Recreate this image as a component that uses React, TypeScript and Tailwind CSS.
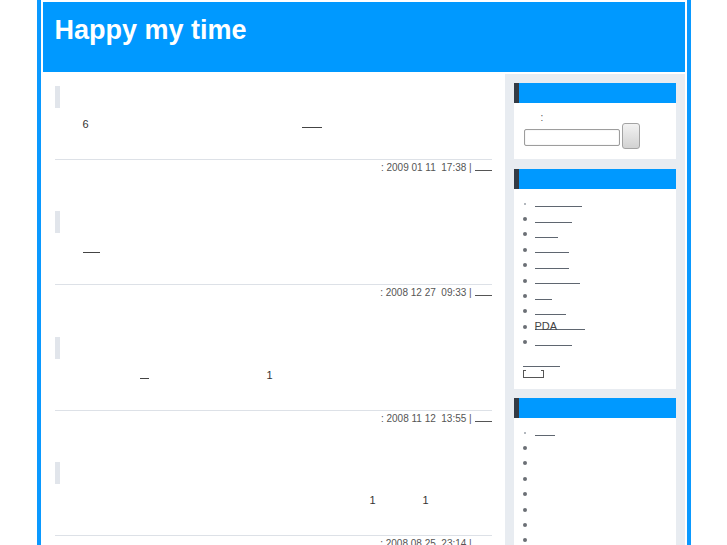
import React from "react";

const Blank = ({ w, color = "border-[#5f6670]" }: { w: string; color?: string }) => (
  <span className={`inline-block h-[7px] border-b ${color} ${w}`} />
);

const Spacer = ({ w }: { w: string }) => <span className={`inline-block h-[7px] ${w}`} />;

const Post = ({ content, footer }: { content: React.ReactNode; footer: string }) => (
  <div className="h-[125.33px] flex flex-col">
    <div className="w-[5px] h-[22px] bg-[#e1e5eb]" />
    <div className="mt-[10px] h-[13px] flex items-center pl-[28px] text-[11px] leading-[13px] text-[#333]">
      {content}
    </div>
    <div className="mt-[28px] border-t border-[#dde1e7]" />
    <div className="mt-[1px] h-[14px] leading-[14px] text-[10px] text-right text-[#555] whitespace-pre">
      {footer}
      <span className="inline-block w-[17px] h-[6px] border-b border-[#555]" />
    </div>
  </div>
);

const Bullet = ({ small }: { small?: boolean }) =>
  small ? (
    <span className="ml-[10px] mr-[9px] w-[2px] h-[2px] rounded-full bg-[#9aa0a8]" />
  ) : (
    <span className="ml-[9px] mr-[8px] w-[4px] h-[4px] rounded-full bg-[#6b6f75]" />
  );

const Item = ({ small, children }: { small?: boolean; children?: React.ReactNode }) => (
  <li className="h-[15.4px] flex items-center">
    <Bullet small={small} />
    {children}
  </li>
);

const WidgetHead = () => <div className="h-[20px] bg-[#0099ff] border-l-[5px] border-[#333b45]" />;

export default function App() {
  const cats = ["w-[47px]", "w-[37px]", "w-[23px]", "w-[34px]", "w-[34px]", "w-[45px]", "w-[17px]", "w-[31px]"];
  return (
    <div className="bg-white min-h-[545px] font-['Liberation_Sans',Arial,sans-serif]">
      <div className="mx-auto w-[654px] border-x-4 border-[#0a99ff] px-[2px] pt-[2px] min-h-[545px]">
        <div className="h-[70px] bg-[#0099ff] pl-[12px] pt-[15px]">
          <h1 className="text-[27px] leading-[27px] font-bold text-white">Happy my time</h1>
        </div>
        <div className="flex mt-[2px]">
          <div className="w-[462px] pl-[12px] pr-[13px] pt-[12px]">
            <Post
              footer=": 2009 01 11  17:38 | "
              content={
                <>
                  <span>6</span>
                  <Spacer w="w-[212.9px]" />
                  <Blank w="w-[20px]" color="border-[#444]" />
                </>
              }
            />
            <Post footer=": 2008 12 27  09:33 | " content={<Blank w="w-[17px]" color="border-[#444]" />} />
            <Post
              footer=": 2008 11 12  13:55 | "
              content={
                <>
                  <Spacer w="w-[57px]" />
                  <Blank w="w-[9px]" color="border-[#444]" />
                  <Spacer w="w-[118px]" />
                  <span>1</span>
                </>
              }
            />
            <Post
              footer=": 2008 08 25  23:14 | "
              content={
                <>
                  <Spacer w="w-[287px]" />
                  <span>1</span>
                  <Spacer w="w-[46.9px]" />
                  <span>1</span>
                </>
              }
            />
          </div>
          <div className="w-[180px] bg-[#e8ecf1] p-[9px] pb-0">
            <div>
              <WidgetHead />
              <div className="h-[56px] bg-white pt-[9px] pl-[10px]">
                <div className="h-[11px] leading-[11px] pl-[17px] text-[10px] text-[#555]">:</div>
                <div className="flex items-center gap-[2px]">
                  <div className="mt-[3px] w-[96px] h-[17px] bg-white border border-[#9d9d9d] rounded-[2px] shadow-[inset_0_0_1px_#bbb]" />
                  <div className="w-[18px] h-[26px] rounded-[3px] border border-[#a3a3a3] bg-gradient-to-b from-[#f2f2f2] to-[#d2d2d2]" />
                </div>
              </div>
            </div>
            <div className="mt-[10px]">
              <WidgetHead />
              <div className="h-[200px] bg-white pt-[7px]">
                <ul className="text-[11px] text-[#333]">
                  <Item small>
                    <Blank w={cats[0]} />
                  </Item>
                  {cats.slice(1).map((c, i) => (
                    <Item key={i}>
                      <Blank w={c} />
                    </Item>
                  ))}
                  <Item>
                    <span className="inline-block h-[7px] leading-[7px] w-[50px] border-b border-[#5f6670] text-[11px] text-[#444]">
                      PDA
                    </span>
                  </Item>
                  <Item>
                    <Blank w="w-[37px]" />
                  </Item>
                </ul>
                <div className="pl-[9px] mt-[10px] flex">
                  <Blank w="w-[37px]" />
                </div>
                <div className="pl-[9.5px] mt-[3px] flex">
                  <span className="w-[3px] h-[8px] border-l border-t border-b border-[#555]" />
                  <span className="w-[15px] h-[8px] border-b border-[#555]" />
                  <span className="w-[3px] h-[8px] border-r border-t border-b border-[#555]" />
                </div>
              </div>
            </div>
            <div className="mt-[9px]">
              <WidgetHead />
              <div className="h-[160px] bg-white pt-[7px]">
                <ul>
                  <Item small>
                    <Blank w="w-[20px]" />
                  </Item>
                  {[0, 1, 2, 3, 4, 5, 6, 7].map((i) => (
                    <Item key={i} />
                  ))}
                </ul>
              </div>
            </div>
          </div>
        </div>
      </div>
    </div>
  );
}
